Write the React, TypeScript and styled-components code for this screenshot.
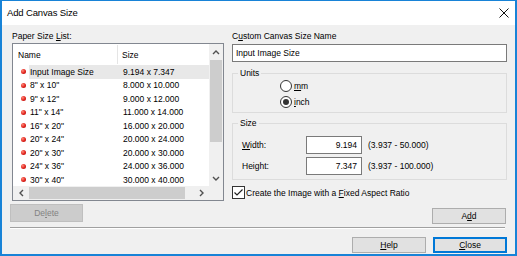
import React from 'react'
import styled, { createGlobalStyle } from 'styled-components'

const Global = createGlobalStyle`
body {
  margin: 0;
  background: #fff;
  font-family: 'Liberation Sans', Arial, sans-serif;
}
`

const Window = styled.div`
width: 517px;
height: 256px;
box-sizing: border-box;
border: 2px solid #1883d7;
border-top-width: 1px;
background: #f0f0f0;
display: flex;
flex-direction: column;
font-size: 8.5px;
line-height: 12px;
color: #000;
`

const TitleBar = styled.div`
height: 24px;
flex: none;
background: #fff;
display: flex;
align-items: center;
justify-content: space-between;
padding: 0 6px 0 5px;
font-size: 9.5px;
letter-spacing: -0.15px;
`

const Body = styled.div`
display: grid;
grid-template-columns: 214px 275px;
column-gap: 8px;
padding: 5px 8px 0 8px;
`

const Column = styled.div`
display: flex;
flex-direction: column;
align-items: stretch;
`

const Label = styled.div<{ $indent?: number }>`
line-height: 12px;
margin-left: ${p => p.$indent ?? 0}px;
`

const ListBox = styled.div`
margin: 1px 0 0 2px;
width: 212px;
height: 158px;
box-sizing: border-box;
border: 1px solid #828790;
background: #fff;
display: grid;
grid-template-columns: 1fr 14px;
grid-template-rows: 1fr 14px;
overflow: hidden;
`

const Table = styled.div`
display: flex;
flex-direction: column;
overflow: hidden;
`

const HeaderRow = styled.div`
height: 21px;
flex: none;
display: flex;
align-items: center;
`

const HeadCell = styled.div<{ $w?: number }>`
height: 19px;
display: flex;
align-items: center;
box-sizing: border-box;
${p => p.$w ? `width: ${p.$w}px; border-right: 1px solid #e5e5e5; padding-left: 5px;` : 'padding-left: 4px;'}
`

const Row = styled.div`
height: 13.5px;
flex: none;
display: flex;
align-items: stretch;
`

const BulletCell = styled.div`
width: 16px;
flex: none;
display: flex;
align-items: center;
`

const Bullet = styled.span`
width: 5px;
height: 5px;
margin-left: 8px;
border-radius: 50%;
background: radial-gradient(circle at 35% 35%, #ff8a7a 0%, #e0201a 55%, #a00c08 100%);
`

const RowBody = styled.div<{ $selected?: boolean }>`
flex: 1;
display: flex;
align-items: center;
background: ${p => (p.$selected ? '#e8e8e8' : 'transparent')};
`

const NameCell = styled.div`
width: 89px;
padding-left: 1px;
box-sizing: border-box;
white-space: nowrap;
`

const SizeCell = styled.div`
padding-left: 5px;
white-space: nowrap;
`

const VScroll = styled.div`
background: #f0f0f0;
display: flex;
flex-direction: column;
align-items: stretch;
`

const HScroll = styled.div`
background: #f0f0f0;
display: flex;
align-items: stretch;
`

const Corner = styled.div`
background: #f0f0f0;
`

const Spacer = styled.div`
flex: 1;
`

const ArrowBtn = styled.div<{ $len: number; $vertical?: boolean }>`
flex: none;
${p => (p.$vertical ? `height: ${p.$len}px;` : `width: ${p.$len}px;`)}
display: flex;
align-items: center;
justify-content: center;
`

const Thumb = styled.div<{ $len: number; $vertical?: boolean }>`
flex: none;
background: #cdcdcd;
${p => (p.$vertical ? `height: ${p.$len}px; margin: 0 1px;` : `width: ${p.$len}px; margin: 1px 0;`)}
`

const Button = styled.button<{ $width: number; $height?: number; $default?: boolean }>`
width: ${p => p.$width}px;
height: ${p => p.$height ?? 16}px;
box-sizing: border-box;
padding: 0;
font-family: 'Liberation Sans', Arial, sans-serif;
font-size: 8.5px;
line-height: 12px;
color: #000;
background: #e1e1e1;
border: 1px solid ${p => (p.$default ? '#0078d7' : '#adadad')};
box-shadow: ${p => (p.$default ? 'inset 0 0 0 1px #0078d7' : 'none')};
&:disabled {
  color: #838383;
  background: #cccccc;
  border-color: #bfbfbf;
}
`

const DeleteButton = styled(Button)`
margin-top: 3px;
`

const TextBox = styled.div<{ $align?: 'left' | 'right' }>`
height: 18px;
box-sizing: border-box;
border: 1px solid #7a7a7a;
background: #fff;
display: flex;
align-items: center;
justify-content: ${p => (p.$align === 'right' ? 'flex-end' : 'flex-start')};
padding: 0 4px 0 3px;
white-space: nowrap;
`

const NameBox = styled(TextBox)`
margin-top: 2px;
`

const Group = styled.fieldset<{ $gap: number }>`
margin: ${p => p.$gap}px 0 0 0;
padding: 0;
border: 1px solid #dcdcdc;
min-width: 0;
`

const Legend = styled.legend`
margin-left: 5px;
padding: 0 2px;
line-height: 12px;
`

const UnitsBody = styled.div`
display: flex;
flex-direction: column;
gap: 4px;
padding: 1px 0 4px 47px;
`

const RadioRow = styled.label`
display: flex;
align-items: center;
height: 12px;
gap: 2px;
`

const SizeBody = styled.div`
display: grid;
grid-template-columns: 73px 56px auto;
grid-auto-rows: 18px;
row-gap: 3px;
align-items: center;
padding: 7px 0 4px 0;
`

const FieldName = styled.div`
padding-left: 9px;
`

const Range = styled.div`
padding-left: 6px;
white-space: nowrap;
`

const CheckRow = styled.label`
margin-top: 6px;
display: flex;
align-items: center;
height: 13px;
gap: 1px;
white-space: nowrap;
`

const ButtonRow = styled.div<{ $gap?: number }>`
display: flex;
justify-content: flex-end;
gap: ${p => p.$gap ?? 0}px;
`

const AddRow = styled(ButtonRow)`
margin-top: 9px;
padding-right: 1px;
`

const Separator = styled.div`
margin: 3px 10px 0 8px;
border-top: 1px solid #a0a0a0;
border-bottom: 1px solid #fff;
`

const Footer = styled(ButtonRow)`
margin-top: 8px;
padding-right: 8px;
`

const Key = styled.span`
text-decoration: underline;
text-underline-offset: 1px;
`

const rows = [
  ['Input Image Size', '9.194 x 7.347'],
  ['8" x 10"', '8.000 x 10.000'],
  ['9" x 12"', '9.000 x 12.000'],
  ['11" x 14"', '11.000 x 14.000'],
  ['16" x 20"', '16.000 x 20.000'],
  ['20" x 24"', '20.000 x 24.000'],
  ['20" x 30"', '20.000 x 30.000'],
  ['24" x 36"', '24.000 x 36.000'],
  ['30" x 40"', '30.000 x 40.000'],
]

const Chevron = ({ dir }: { dir: 'up' | 'down' | 'left' | 'right' }) => {
  const pts = {
    up: '1,5 4,2 7,5',
    down: '1,2 4,5 7,2',
    left: '5,1 2,4 5,7',
    right: '2,1 5,4 2,7',
  }[dir]
  const vertical = dir === 'up' || dir === 'down'
  return (
    <svg width={vertical ? 8 : 7} height={vertical ? 7 : 8} viewBox={vertical ? '0 0 8 7' : '0 0 7 8'}>
      <polyline points={pts} fill="none" stroke="#505050" strokeWidth="1.4" />
    </svg>
  )
}

const Radio = ({ checked }: { checked?: boolean }) => (
  <svg width="12" height="12" viewBox="0 0 12 12">
    <circle cx="6" cy="6" r="5.5" fill="#fff" stroke="#333" />
    {checked && <circle cx="6" cy="6" r="3" fill="#333" />}
  </svg>
)

const Checkbox = () => (
  <svg width="13" height="13" viewBox="0 0 13 13">
    <rect x="0.5" y="0.5" width="12" height="12" fill="#fff" stroke="#333" />
    <polyline points="2.5,6.5 5,9 10.5,3.5" fill="none" stroke="#222" strokeWidth="1.2" />
  </svg>
)

export default function App() {
  return (
    <>
      <Global />
      <Window>
        <TitleBar>
          <span>Add Canvas Size</span>
          <svg width="10" height="10" viewBox="0 0 10 10">
            <path d="M0.5 0.5 L9.5 9.5 M9.5 0.5 L0.5 9.5" stroke="#111" strokeWidth="1" />
          </svg>
        </TitleBar>
        <Body>
          <Column>
            <Label $indent={2}>Paper Size <Key>L</Key>ist:</Label>
            <ListBox>
              <Table>
                <HeaderRow>
                  <HeadCell $w={105}>Name</HeadCell>
                  <HeadCell>Size</HeadCell>
                </HeaderRow>
                {rows.map(([name, size], i) => (
                  <Row key={name}>
                    <BulletCell><Bullet /></BulletCell>
                    <RowBody $selected={i === 0}>
                      <NameCell>{name}</NameCell>
                      <SizeCell>{size}</SizeCell>
                    </RowBody>
                  </Row>
                ))}
              </Table>
              <VScroll>
                <ArrowBtn $vertical $len={16}><Chevron dir="up" /></ArrowBtn>
                <Thumb $vertical $len={82} />
                <Spacer />
                <ArrowBtn $vertical $len={16}><Chevron dir="down" /></ArrowBtn>
              </VScroll>
              <HScroll>
                <ArrowBtn $len={16}><Chevron dir="left" /></ArrowBtn>
                <Thumb $len={156} />
                <Spacer />
                <ArrowBtn $len={16}><Chevron dir="right" /></ArrowBtn>
              </HScroll>
              <Corner />
            </ListBox>
            <DeleteButton $width={73} $height={18} disabled>
              De<Key>l</Key>ete
            </DeleteButton>
          </Column>
          <Column>
            <Label>C<Key>u</Key>stom Canvas Size Name</Label>
            <NameBox>Input Image Size</NameBox>
            <Group $gap={5}>
              <Legend>Units</Legend>
              <UnitsBody>
                <RadioRow><Radio /><span><Key>m</Key>m</span></RadioRow>
                <RadioRow><Radio checked /><span><Key>i</Key>nch</span></RadioRow>
              </UnitsBody>
            </Group>
            <Group $gap={4}>
              <Legend>Size</Legend>
              <SizeBody>
                <FieldName><Key>W</Key>idth:</FieldName>
                <TextBox $align="right">9.194</TextBox>
                <Range>(3.937 - 50.000)</Range>
                <FieldName>Height:</FieldName>
                <TextBox $align="right">7.347</TextBox>
                <Range>(3.937 - 100.000)</Range>
              </SizeBody>
            </Group>
            <CheckRow>
              <Checkbox />
              <span>Create the Image with a <Key>F</Key>ixed Aspect Ratio</span>
            </CheckRow>
            <AddRow>
              <Button $width={74}>A<Key>d</Key>d</Button>
            </AddRow>
          </Column>
        </Body>
        <Separator />
        <Footer $gap={7}>
          <Button $width={74}><Key>H</Key>elp</Button>
          <Button $width={74} $default><Key>C</Key>lose</Button>
        </Footer>
      </Window>
    </>
  )
}
